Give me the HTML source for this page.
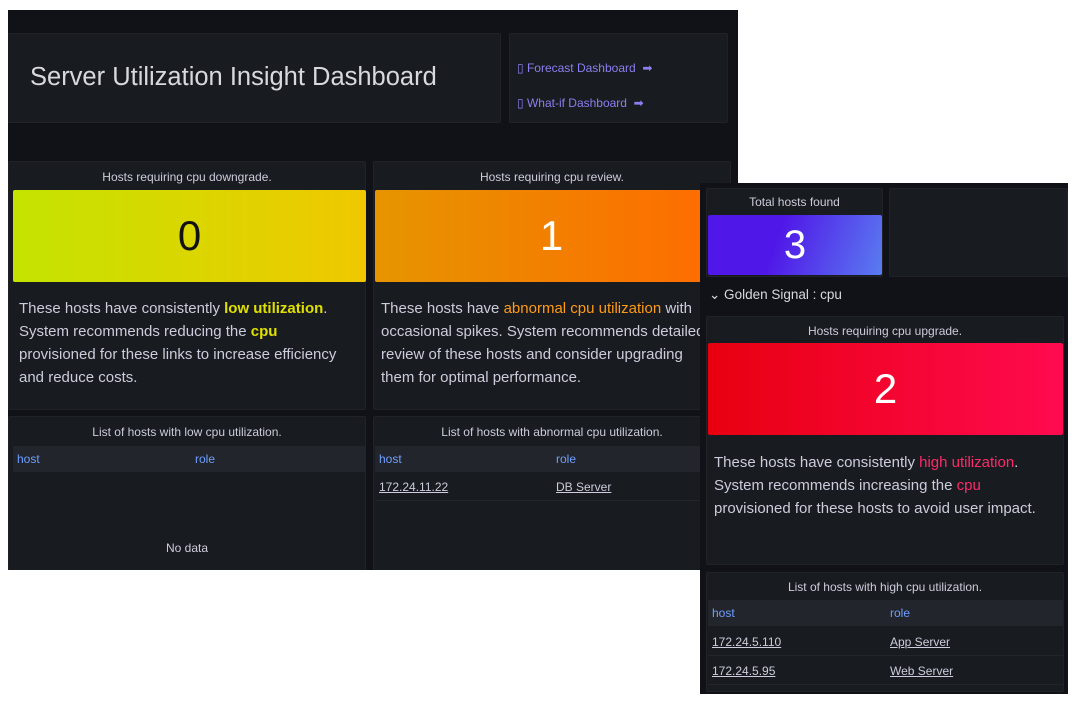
<!DOCTYPE html>
<html><head><style>
*{margin:0;padding:0;box-sizing:border-box}
body{width:1091px;height:704px;background:#fff;position:relative;overflow:hidden;font-family:"Liberation Sans",sans-serif}
.a{position:absolute}
.main{left:8px;top:10px;width:730px;height:560px;background:#111217;overflow:hidden}
.p{position:absolute;background:#181b1f;border:1px solid #202226;border-radius:2px}
.t{color:#ccccdc;font-size:12px;text-align:center;position:absolute;left:0;right:0}
.txt{position:absolute;color:#ccccdc;font-size:15px;line-height:23px}
.th{position:absolute;background:#22252b;height:26px;color:#6e9fff;font-size:12px;line-height:26px}
.th span,.tr span{position:absolute;padding-left:4px}
.tr{position:absolute;height:28px;border-bottom:1px solid #22252b;color:#ccccdc;font-size:12px;line-height:28px}
.tr span{text-decoration:underline}
.big{position:absolute;display:flex;align-items:center;justify-content:center;font-size:42px;border-radius:2px}
</style></head><body>
<div class="a main">
 <div class="p" style="left:-2px;top:23px;width:495px;height:90px"><div class="a" style="left:23px;top:29px;color:#d8d9e0;font-size:25.5px">Server Utilization Insight Dashboard</div></div>
 <div class="p" style="left:501px;top:23px;width:219px;height:90px">
  <div class="a" style="left:7px;top:27px;color:#8a7ff0;font-size:12px">▯ Forecast Dashboard &nbsp;➡</div>
  <div class="a" style="left:7px;top:62px;color:#8a7ff0;font-size:12px">▯ What-if Dashboard &nbsp;➡</div>
 </div>
 <div class="p" style="left:0;top:151px;width:358px;height:249px">
  <div class="t" style="top:8px">Hosts requiring cpu downgrade.</div>
  <div class="big" style="left:4px;top:28px;width:353px;height:92px;background:linear-gradient(90deg,#c4e400,#f0c800);color:#111">0</div>
  <div class="txt" style="left:10px;top:135px;width:336px">These hosts have consistently <b style="color:#e0e000">low utilization</b>. System recommends reducing the <b style="color:#e0e000">cpu</b> provisioned for these links to increase efficiency and reduce costs.</div>
 </div>
 <div class="p" style="left:365px;top:151px;width:358px;height:249px">
  <div class="t" style="top:8px">Hosts requiring cpu review.</div>
  <div class="big" style="left:1px;top:28px;width:353px;height:92px;background:linear-gradient(90deg,#e69500,#ff6a00);color:#fff">1</div>
  <div class="txt" style="left:7px;top:135px;width:328px">These hosts have <span style="color:#ff9a1a">abnormal cpu utilization</span> with occasional spikes. System recommends detailed review of these hosts and consider upgrading them for optimal performance.</div>
 </div>
 <div class="p" style="left:0;top:406px;width:358px;height:160px">
  <div class="t" style="top:8px">List of hosts with low cpu utilization.</div>
  <div class="th" style="left:4px;top:29px;width:353px"><span style="left:0">host</span><span style="left:178px">role</span></div>
  <div class="t" style="top:124px">No data</div>
 </div>
 <div class="p" style="left:365px;top:406px;width:358px;height:160px">
  <div class="t" style="top:8px">List of hosts with abnormal cpu utilization.</div>
  <div class="th" style="left:1px;top:29px;width:353px"><span style="left:0">host</span><span style="left:177px">role</span></div>
  <div class="tr" style="left:1px;top:56px;width:353px"><span style="left:0">172.24.11.22</span><span style="left:177px">DB Server</span></div>
 </div>
</div>
<div class="a" style="left:700px;top:183px;width:368px;height:511px;background:#111217">
 <div class="p" style="left:6px;top:5px;width:177px;height:89px">
  <div class="t" style="top:6px">Total hosts found</div>
  <div class="big" style="left:1px;top:26px;width:174px;height:60px;background:linear-gradient(110deg,#5018e8 40%,#5a7cf0);color:#fff;font-size:40px">3</div>
 </div>
 <div class="p" style="left:189px;top:5px;width:179px;height:89px"></div>
 <div class="a" style="left:9px;top:104px;color:#d8d9e0;font-size:13.5px">⌄ Golden Signal : cpu</div>
 <div class="p" style="left:6px;top:133px;width:358px;height:249px">
  <div class="t" style="top:7px">Hosts requiring cpu upgrade.</div>
  <div class="big" style="left:1px;top:26px;width:355px;height:92px;background:linear-gradient(90deg,#e80010,#ff0a50);color:#fff">2</div>
  <div class="txt" style="left:7px;top:134px;width:345px">These hosts have consistently <span style="color:#ff2a6a">high utilization</span>. System recommends increasing the <span style="color:#ff2a6a">cpu</span> provisioned for these hosts to avoid user impact.</div>
 </div>
 <div class="p" style="left:6px;top:389px;width:358px;height:120px">
  <div class="t" style="top:7px">List of hosts with high cpu utilization.</div>
  <div class="th" style="left:1px;top:27px;width:355px"><span style="left:0">host</span><span style="left:178px">role</span></div>
  <div class="tr" style="left:1px;top:55px;width:355px"><span style="left:0">172.24.5.110</span><span style="left:178px">App Server</span></div>
  <div class="tr" style="left:1px;top:84px;width:355px"><span style="left:0">172.24.5.95</span><span style="left:178px">Web Server</span></div>
 </div>
</div>
</body></html>
